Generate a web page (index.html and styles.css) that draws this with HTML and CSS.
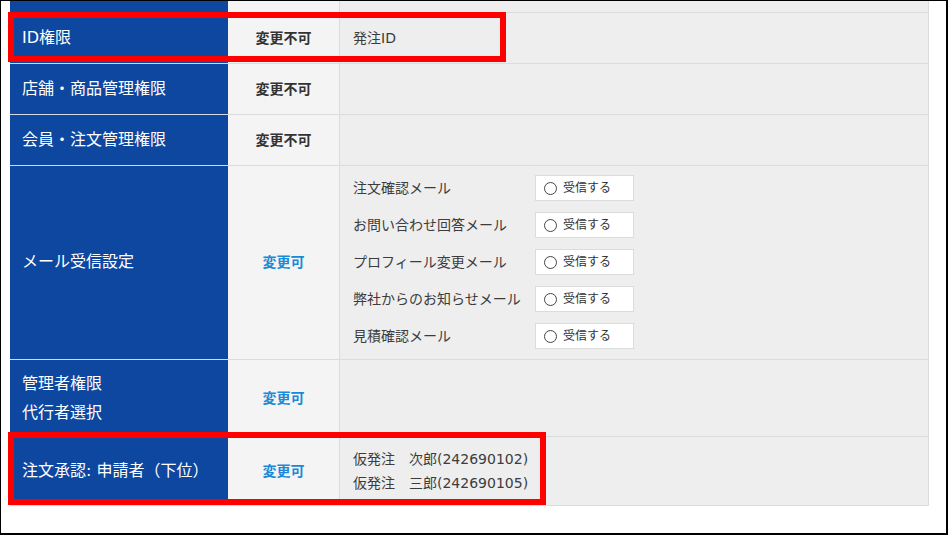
FILE: index.html
```html
<!DOCTYPE html>
<html lang="ja">
<head>
<meta charset="utf-8">
<title>権限設定</title>
<link rel="stylesheet" href="styles.css">
</head>
<body>
<div class="frame">
  <div class="perm-table">
    <div class="cell head row-cut"></div>
    <div class="cell mode row-cut"></div>
    <div class="cell value row-cut"></div>

    <div class="cell head row-std">ID権限</div>
    <div class="cell mode row-std fixed">変更不可</div>
    <div class="cell value row-std">発注ID</div>

    <div class="cell head row-std">店舗・商品管理権限</div>
    <div class="cell mode row-std fixed">変更不可</div>
    <div class="cell value row-std"></div>

    <div class="cell head row-std">会員・注文管理権限</div>
    <div class="cell mode row-std fixed">変更不可</div>
    <div class="cell value row-std"></div>

    <div class="cell head row-mail">メール受信設定</div>
    <div class="cell mode row-mail editable">変更可</div>
    <div class="cell value row-mail">
      <div class="mail-grid">
        <span class="mail-label">注文確認メール</span>
        <label class="radio"><span class="dot"></span>受信する</label>
        <span class="mail-label">お問い合わせ回答メール</span>
        <label class="radio"><span class="dot"></span>受信する</label>
        <span class="mail-label">プロフィール変更メール</span>
        <label class="radio"><span class="dot"></span>受信する</label>
        <span class="mail-label">弊社からのお知らせメール</span>
        <label class="radio"><span class="dot"></span>受信する</label>
        <span class="mail-label">見積確認メール</span>
        <label class="radio"><span class="dot"></span>受信する</label>
      </div>
    </div>

    <div class="cell head row-admin"><div class="lines"><span>管理者権限</span><span>代行者選択</span></div></div>
    <div class="cell mode row-admin editable">変更可</div>
    <div class="cell value row-admin"></div>

    <div class="cell head row-approve">注文承認: 申請者（下位）</div>
    <div class="cell mode row-approve editable">変更可</div>
    <div class="cell value row-approve"><div class="names"><span>仮発注　次郎(242690102)</span><span>仮発注　三郎(242690105)</span></div></div>
  </div>
  <div class="mark mark-id"></div>
  <div class="mark mark-approve"></div>
</div>
</body>
</html>
```

FILE: styles.css
```css
html, body {
  margin: 0;
  padding: 0;
  background: #fff;
}

.frame {
  position: relative;
  box-sizing: border-box;
  width: 948px;
  height: 535px;
  border-top: 1px solid #000;
  border-left: 1px solid #000;
  border-right: 2px solid #000;
  border-bottom: 2px solid #000;
  padding-left: 9px;
  overflow: hidden;
  font-family: "DejaVu Sans", "Noto Sans CJK JP", sans-serif;
}

.perm-table {
  display: grid;
  grid-template-columns: 218px 111px 590px;
}

.cell {
  box-sizing: border-box;
  display: flex;
  align-items: center;
  border-bottom: 1px solid #dcdcdc;
  line-height: 24px;
  padding-bottom: 1px;
}

.head {
  background: #0e47a0;
  color: #fff;
  font-size: 16px;
  padding-left: 12px;
  border-bottom-color: #d4dbe6;
}

.mode {
  background: #f4f4f4;
  justify-content: center;
  font-size: 14px;
  font-weight: bold;
}

.fixed { color: #333; }
.editable { color: #1a8ad8; }

.value {
  background: #eeeeee;
  border-left: 1px solid #dcdcdc;
  border-right: 1px solid #dcdcdc;
  padding-left: 13px;
  font-size: 14px;
  color: #3c3c3c;
}

.row-cut { height: 12px; }
.row-std { height: 51px; }
.row-mail { height: 194px; }
.row-admin { height: 77px; }
.row-approve { height: 69px; }

.lines, .names {
  display: flex;
  flex-direction: column;
}

.lines span { line-height: 29px; }
.names span { line-height: 24px; }

.mail-grid {
  display: grid;
  grid-template-columns: 182px 99px;
  row-gap: 11px;
  align-items: center;
}

.mail-label {
  line-height: 26px;
}

.radio {
  box-sizing: border-box;
  display: flex;
  align-items: center;
  height: 26px;
  background: #fff;
  border: 1px solid #dcdcdc;
  padding-left: 8px;
  font-size: 12px;
  color: #333;
}

.dot {
  box-sizing: border-box;
  width: 13px;
  height: 13px;
  border: 1px solid #444;
  border-radius: 50%;
  background: #fff;
  margin-right: 6px;
}

.mark {
  position: absolute;
  box-sizing: border-box;
  border: 6px solid #ff0000;
}

.mark-id {
  left: 7px;
  top: 11px;
  width: 498px;
  height: 50px;
}

.mark-approve {
  left: 7px;
  top: 431px;
  width: 538px;
  height: 73px;
}
```
